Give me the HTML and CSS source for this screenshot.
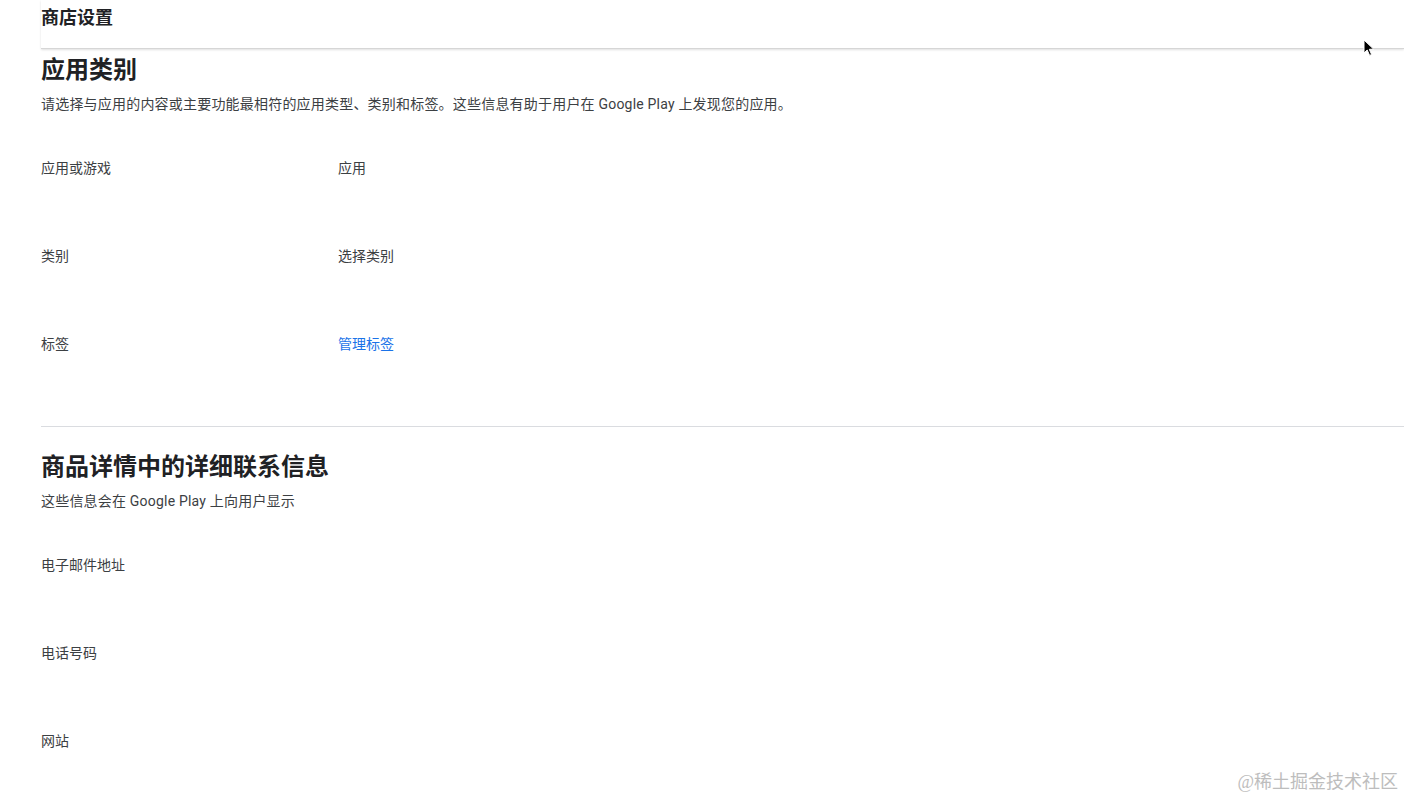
FILE: index.html
```html
<!DOCTYPE html>
<html lang="zh-CN">
<head>
  <meta charset="UTF-8" />
  <meta name="viewport" content="width=device-width, initial-scale=1.0" />
  <title>商店设置</title>
  <link rel="stylesheet" href="styles.css">
</head>
<body>

  <div class="page">
    <div class="top-bar">商店设置</div>

    <section class="section section-first">
      <h2>应用类别</h2>
      <p class="desc">请选择与应用的内容或主要功能最相符的应用类型、类别和标签。这些信息有助于用户在 Google Play 上发现您的应用。</p>
      <div class="rows">
        <div class="row">
          <span class="label">应用或游戏</span>
          <span class="value">应用</span>
        </div>
        <div class="row">
          <span class="label">类别</span>
          <span class="value">选择类别</span>
        </div>
        <div class="row">
          <span class="label">标签</span>
          <a class="value link" href="#">管理标签</a>
        </div>
      </div>
    </section>

    <section class="section">
      <h2>商品详情中的详细联系信息</h2>
      <p class="desc">这些信息会在 Google Play 上向用户显示</p>
      <div class="rows">
        <div class="row">
          <span class="label">电子邮件地址</span>
          <span class="value"></span>
        </div>
        <div class="row">
          <span class="label">电话号码</span>
          <span class="value"></span>
        </div>
        <div class="row">
          <span class="label">网站</span>
          <span class="value"></span>
        </div>
      </div>
    </section>
  </div>

  <!-- mouse pointer captured in the screenshot -->
  <svg class="cursor" width="12" height="18" viewBox="0 0 12 18">
    <path d="M1 1 L1 14 L4.2 11 L6.6 16.4 L8.6 15.5 L6.3 10.3 L10.6 10.1 Z" fill="#000" stroke="#fff" stroke-width="1"/>
  </svg>

  <div class="watermark">@稀土掘金技术社区</div>

</body>
</html>
```

FILE: styles.css
```css
body {
  margin: 0;
  font-family: Roboto, "Noto Sans CJK SC", sans-serif;
  color: #3c4043;
  background: #fff;
}
.page {
  padding-left: 41px;
}
.top-bar {
  height: 49px;
  box-sizing: border-box;
  padding-top: 7px;
  font-size: 18px;
  line-height: 22px;
  font-weight: 600;
  color: #202124;
  border-bottom: 1px solid #d6d6d6;
  box-shadow: 0 1px 2px rgba(0, 0, 0, 0.12);
}
.section {
  padding-top: 24px;
  border-bottom: 1px solid #dadce0;
}
.section:last-child {
  border-bottom: none;
}
.section-first {
  padding-top: 5px;
}
.section h2 {
  margin: 0;
  font-size: 24px;
  line-height: 32px;
  font-weight: 600;
  color: #202124;
}
.desc {
  margin: 8px 0 0;
  font-size: 14px;
  line-height: 20px;
  letter-spacing: 0.2px;
  color: #3c4043;
}
.rows {
  padding-top: 44px;
  padding-bottom: 4px;
}
.row {
  display: grid;
  grid-template-columns: 297px 1fr;
  height: 88px;
  font-size: 14px;
  line-height: 20px;
}
.label {
  color: #3c4043;
}
.value {
  color: #3c4043;
}
.link {
  color: #1a73e8;
  text-decoration: none;
}
.cursor {
  position: absolute;
  left: 1363px;
  top: 39px;
}
.watermark {
  position: absolute;
  right: 6px;
  bottom: 6px;
  font-family: "Liberation Serif", "Noto Sans CJK SC", serif;
  font-size: 18px;
  color: #bdbdbd;
}
```
